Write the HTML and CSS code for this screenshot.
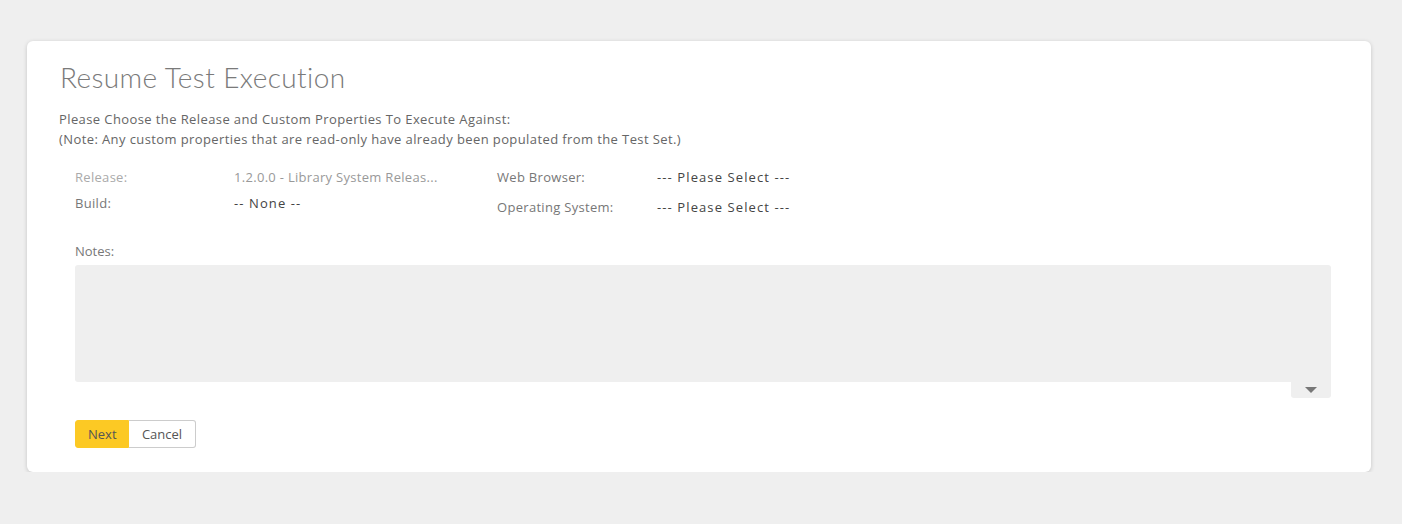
FILE: index.html
```html
<!DOCTYPE html>
<html>
<head>
<meta charset="utf-8">
<link rel="stylesheet" href="styles.css">
</head>
<body>
<div class="card">
  <h1 class="title">Resume Test Execution</h1>
  <p class="intro">Please Choose the Release and Custom Properties To Execute Against:<br>(Note: Any custom properties that are read-only have already been populated from the Test Set.)</p>
  <div class="form">
    <div class="col col-left">
      <div class="label disabled">Release:</div><div class="value disabled">1.2.0.0 - Library System Releas...</div>
      <div class="label">Build:</div><div class="value dashed">-- None --</div>
    </div>
    <div class="col col-right">
      <div class="label">Web Browser:</div><div class="value dashed">--- Please Select ---</div>
      <div class="label">Operating System:</div><div class="value dashed">--- Please Select ---</div>
    </div>
  </div>
  <div class="notes">
    <div class="notes-label">Notes:</div>
    <div class="notes-box"></div>
    <div class="handle-row"><div class="handle"><span class="tri"></span></div></div>
  </div>
  <div class="buttons">
    <button class="btn btn-primary">Next</button><button class="btn btn-default">Cancel</button>
  </div>
</div>
</body>
</html>
```
FILE: styles.css
```css
html, body {
  margin: 0;
  padding: 0;
  background: #efefef;
}
body {
  font-family: "Open Sans", "Liberation Sans", sans-serif;
  color: #666;
  padding: 41px 31px 0 27px;
}
.card {
  background: #fff;
  border-radius: 6px;
  box-shadow: 0 1px 4px rgba(0,0,0,0.18);
  height: 431px;
  box-sizing: border-box;
  padding: 18px 40px 24px 33px;
}
.title {
  margin: 0;
  font-family: "Lato", "Liberation Sans", sans-serif;
  font-size: 28px;
  line-height: 36px;
  font-weight: 300;
  color: #7a7a7a;
  letter-spacing: 0.4px;
}
.intro {
  margin: 14px 0 0 -1px;
  font-size: 13px;
  line-height: 20px;
  color: #666;
  letter-spacing: 0.4px;
}
.form {
  margin: 13px 0 0 15px;
  display: flex;
  font-size: 13px;
  letter-spacing: 0.3px;
}
.col {
  display: grid;
}
.col-left {
  grid-template-columns: 159px 263px;
  grid-auto-rows: 26px;
  padding-top: 2px;
}
.col-right {
  grid-template-columns: 160px 200px;
  grid-auto-rows: 30px;
}
.label, .value {
  display: flex;
  align-items: center;
  white-space: nowrap;
}
.label { color: #777; }
.value { color: #444; }
.value.dashed { letter-spacing: 1.1px; }
.label.disabled { color: #aaa; }
.value.disabled { color: #999; }
.notes {
  margin: 19px 0 0 15px;
}
.notes-label {
  font-size: 13px;
  line-height: 20px;
  color: #777;
}
.notes-box {
  margin-top: 4px;
  height: 117px;
  background: #efefef;
  border-radius: 3px 3px 0 3px;
}
.handle-row {
  display: flex;
  justify-content: flex-end;
}
.handle {
  width: 40px;
  height: 16px;
  background: #efefef;
  border-radius: 0 0 3px 3px;
  display: flex;
  justify-content: center;
  align-items: center;
}
.tri {
  width: 0;
  height: 0;
  border-left: 6px solid transparent;
  border-right: 6px solid transparent;
  border-top: 6px solid #777;
}
.buttons {
  margin: 22px 0 0 15px;
  display: flex;
}
.btn {
  height: 28px;
  font-family: inherit;
  font-size: 13px;
  padding: 0 12px;
  margin: 0;
  cursor: pointer;
}
.btn-primary {
  background: #fcc924;
  border: 1px solid #fcc924;
  color: #555;
  border-radius: 3px 0 0 3px;
  width: 54px;
}
.btn-default {
  background: #fff;
  border: 1px solid #ccc;
  border-left: none;
  color: #555;
  border-radius: 0 3px 3px 0;
  width: 67px;
}
```
